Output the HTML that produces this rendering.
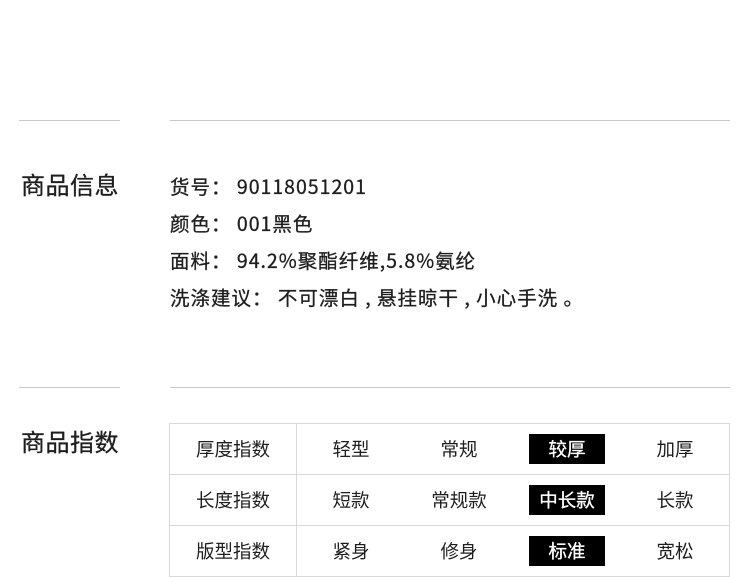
<!DOCTYPE html>
<html><head><meta charset="utf-8"><style>
body{margin:0;width:750px;height:577px;background:#fff;font-family:"Noto Sans CJK SC",sans-serif;color:#1e1e1e;position:relative;overflow:hidden}
.l{position:absolute;height:1px;background:#c8c8c8}
.h{position:absolute;left:21px;font-size:24px;line-height:30px;letter-spacing:0.5px;-webkit-text-stroke:0.3px #1e1e1e}
.i{position:absolute;left:170px;font-size:19.5px;line-height:24px;white-space:nowrap;letter-spacing:1px;-webkit-text-stroke:0.3px #1e1e1e}
table{position:absolute;left:169px;top:423px;border-collapse:collapse;font-size:18.5px}
td{border:1px solid #d9d9d9;height:50px;padding:0;text-align:center;width:108px;line-height:30px}
td.f{width:126px}
td.s{border-left:none;border-right:none}
b{display:inline-block;background:#000;color:#fff;font-weight:normal;width:76px;height:30px;line-height:30px;-webkit-text-stroke:0.3px #fff}
</style></head><body>
<div class="l" style="left:19px;width:101px;top:120px"></div>
<div class="l" style="left:170px;width:560px;top:120px"></div>
<div class="h" style="top:169px">商品信息</div>
<div class="i" style="top:174px">货号：&nbsp;90118051201</div>
<div class="i" style="top:211px">颜色：&nbsp;001黑色</div>
<div class="i" style="top:248px">面料：&nbsp;94.2%聚酯纤维,5.8%氨纶</div>
<div class="i" style="top:285px">洗涤建议：&nbsp;不可漂白 , 悬挂晾干 , 小心手洗 。</div>
<div class="l" style="left:19px;width:101px;top:387px"></div>
<div class="l" style="left:170px;width:560px;top:387px"></div>
<div class="h" style="top:426px">商品指数</div>
<table>
<tr><td class="f">厚度指数</td><td class="s">轻型</td><td class="s">常规</td><td class="s"><b>较厚</b></td><td style="border-left:none">加厚</td></tr>
<tr><td class="f">长度指数</td><td class="s">短款</td><td class="s">常规款</td><td class="s"><b>中长款</b></td><td style="border-left:none">长款</td></tr>
<tr><td class="f">版型指数</td><td class="s">紧身</td><td class="s">修身</td><td class="s"><b>标准</b></td><td style="border-left:none">宽松</td></tr>
</table>
</body></html>
